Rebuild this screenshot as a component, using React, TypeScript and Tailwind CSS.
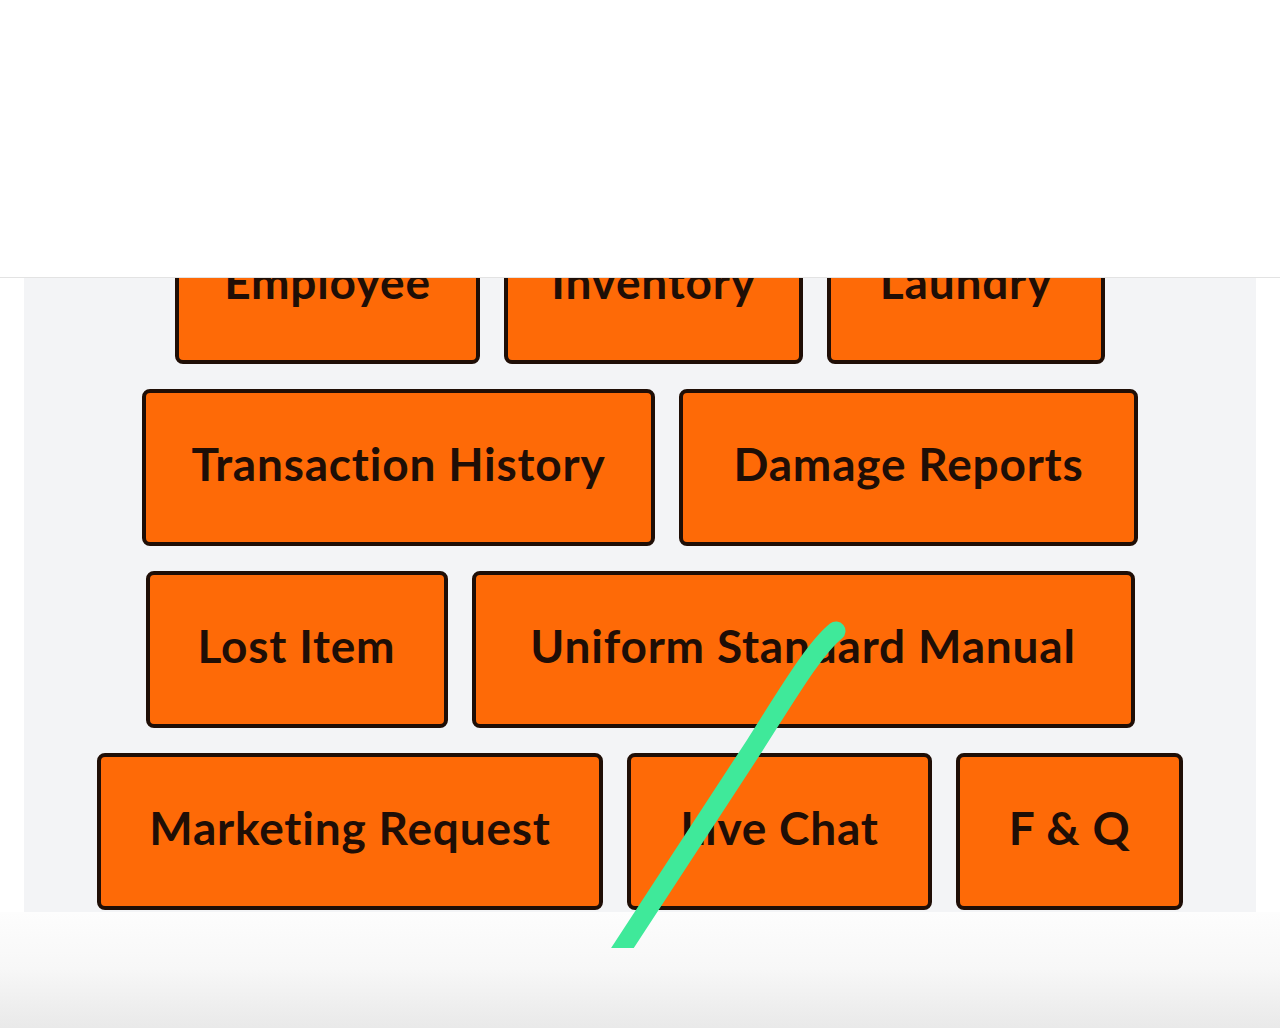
import React from 'react';

const tiles: { label: string; w: string }[] = [
  { label: 'Employee', w: 'w-[305px]' },
  { label: 'Inventory', w: 'w-[299px]' },
  { label: 'Laundry', w: 'w-[278px]' },
  { label: 'Transaction History', w: 'w-[513px]' },
  { label: 'Damage Reports', w: 'w-[459px]' },
  { label: 'Lost Item', w: 'w-[302px]' },
  { label: 'Uniform Standard Manual', w: 'w-[663px]' },
  { label: 'Marketing Request', w: 'w-[506px]' },
  { label: 'Live Chat', w: 'w-[305px]' },
  { label: 'F & Q', w: 'w-[227px]' },
];

const Tile: React.FC<{ label: string; w: string }> = ({ label, w }) => (
  <button
    className={`${w} h-[157px] shrink-0 rounded-lg border-4 border-[#1f0e06] bg-[#fe6a07] pb-2 text-[46px] font-bold tracking-[0.8px] text-[#1f0e06] flex items-center justify-center whitespace-nowrap`}
  >
    {label}
  </button>
);

export default function App() {
  return (
    <div className="relative h-[1028px] w-[1280px] overflow-hidden bg-white font-['Lato','Liberation_Sans',sans-serif]">
      <header className="h-[278px] border-b border-[#e3e3e3] bg-white" />
      <main className="h-[634px] overflow-hidden px-6">
        <div className="-mt-[71px] flex min-h-[720px] flex-wrap content-start justify-center gap-x-6 gap-y-[25px] bg-[#f3f4f6]">
          {tiles.map((t) => (
            <Tile key={t.label} label={t.label} w={t.w} />
          ))}
        </div>
      </main>
      <footer className="h-[116px] bg-gradient-to-b from-[#fdfdfd] via-[#f7f7f7] to-[#e9e9e9]" />

      {/* pen stroke drawn over the screenshot */}
      <svg className="pointer-events-none absolute left-0 top-0" width="1280" height="948" viewBox="0 0 1280 948">
        <path
          d="M836 631 C815 648 790 690 755 745 L595 990"
          fill="none"
          stroke="#3fe99a"
          strokeWidth="19"
          strokeLinecap="round"
        />
      </svg>
    </div>
  );
}
